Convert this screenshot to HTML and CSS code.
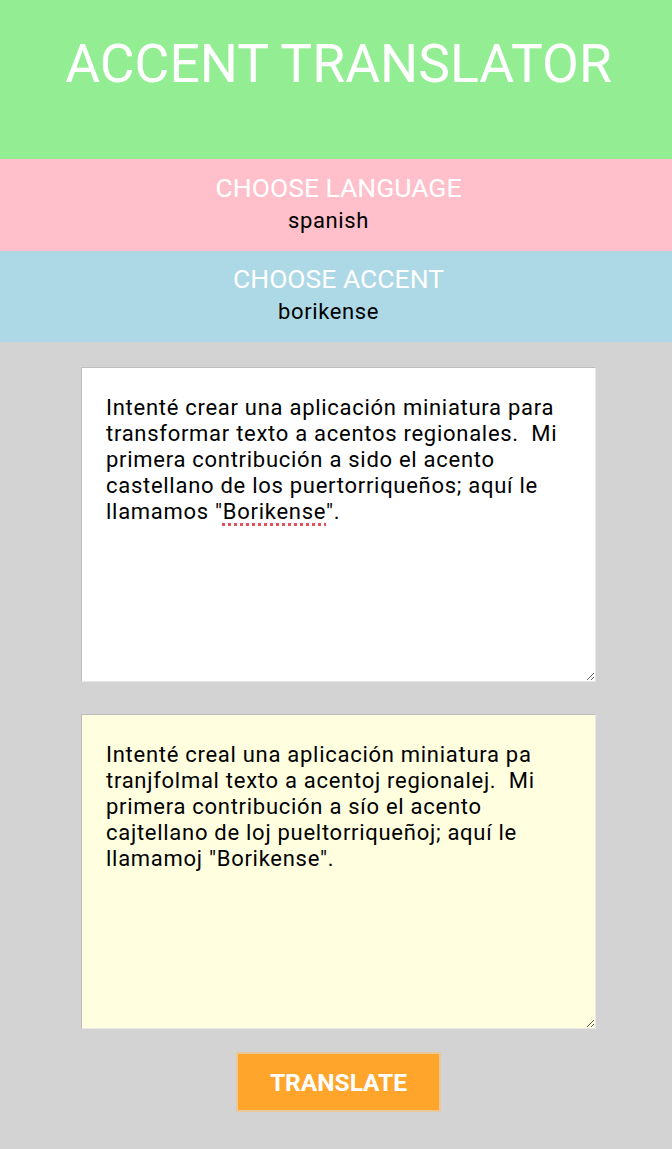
FILE: index.html
```html
<!DOCTYPE html>
<html lang="es">
<head>
<meta charset="utf-8">
<title>Accent Translator</title>
<link rel="stylesheet" href="styles.css">
</head>
<body>
<header class="banner">
  <h1 class="title">ACCENT TRANSLATOR</h1>
</header>
<section class="picker picker-language">
  <div class="picker-label">CHOOSE LANGUAGE</div>
  <div class="picker-value">spanish</div>
</section>
<section class="picker picker-accent">
  <div class="picker-label">CHOOSE ACCENT</div>
  <div class="picker-value">borikense</div>
</section>
<main class="workspace">
  <div class="textbox textbox-input">Intenté crear una aplicación miniatura para transformar texto a acentos regionales.&nbsp; Mi primera contribución a sido el acento castellano de los puertorriqueños; aquí le llamamos "<span class="misspelled">Borikense</span>".</div>
  <div class="textbox textbox-output">Intenté creal una aplicación miniatura pa tranjfolmal texto a acentoj regionalej.&nbsp; Mi primera contribución a sío el acento cajtellano de loj pueltorriqueñoj; aquí le llamamoj "Borikense".</div>
  <button class="translate-btn" type="button">TRANSLATE</button>
</main>
</body>
</html>
```

FILE: styles.css
```css
* {
  box-sizing: border-box;
}

html, body {
  margin: 0;
  padding: 0;
}

body {
  font-family: Roboto, "Liberation Sans", sans-serif;
  background: #d3d3d3;
  min-height: 1149px;
}

.banner {
  background: #93ee93;
  height: 159px;
  padding: 32px 0 0 5px;
}

.title {
  margin: 0;
  color: #ffffff;
  font-weight: 400;
  font-size: 53.5px;
  line-height: 64px;
  text-align: center;
}

.picker {
  display: flex;
  flex-direction: column;
  align-items: center;
  gap: 3px;
  padding: 13px 0 17px 5px;
}

.picker-language {
  background: #ffc0cb;
  height: 92px;
}

.picker-accent {
  background: #add8e6;
  height: 91px;
  padding-top: 12px;
}

.picker-label {
  color: #ffffff;
  font-size: 26.5px;
  line-height: 32px;
}

.picker-value {
  color: #000000;
  font-size: 22px;
  line-height: 27px;
  letter-spacing: 0.6px;
  padding-right: 20px;
}

.workspace {
  display: flex;
  flex-direction: column;
  align-items: center;
  padding: 25px 0 37px 5px;
}

.textbox {
  width: 515px;
  height: 315px;
  padding: 27px 21px 27px 24px;
  font-size: 22px;
  line-height: 26px;
  letter-spacing: 0.72px;
  color: #000000;
  border-style: solid;
  border-width: 1px;
  border-color: #bdbdbd #e6e6e6 #e6e6e6 #bdbdbd;
  resize: both;
  overflow: auto;
}

.textbox-input {
  background: #ffffff;
}

.textbox-output {
  background: #ffffe0;
  margin-top: 32px;
}

.misspelled {
  text-decoration: underline dotted #e8505b;
  text-decoration-thickness: 3px;
  text-underline-offset: 4px;
}

.translate-btn {
  margin-top: 23px;
  width: 205px;
  height: 60px;
  background: #ffa52c;
  color: #ffffff;
  font-family: Roboto, "Liberation Sans", sans-serif;
  font-weight: 700;
  font-size: 24.5px;
  border: 2px solid #e9c89c;
  padding: 0;
  cursor: pointer;
}
```
